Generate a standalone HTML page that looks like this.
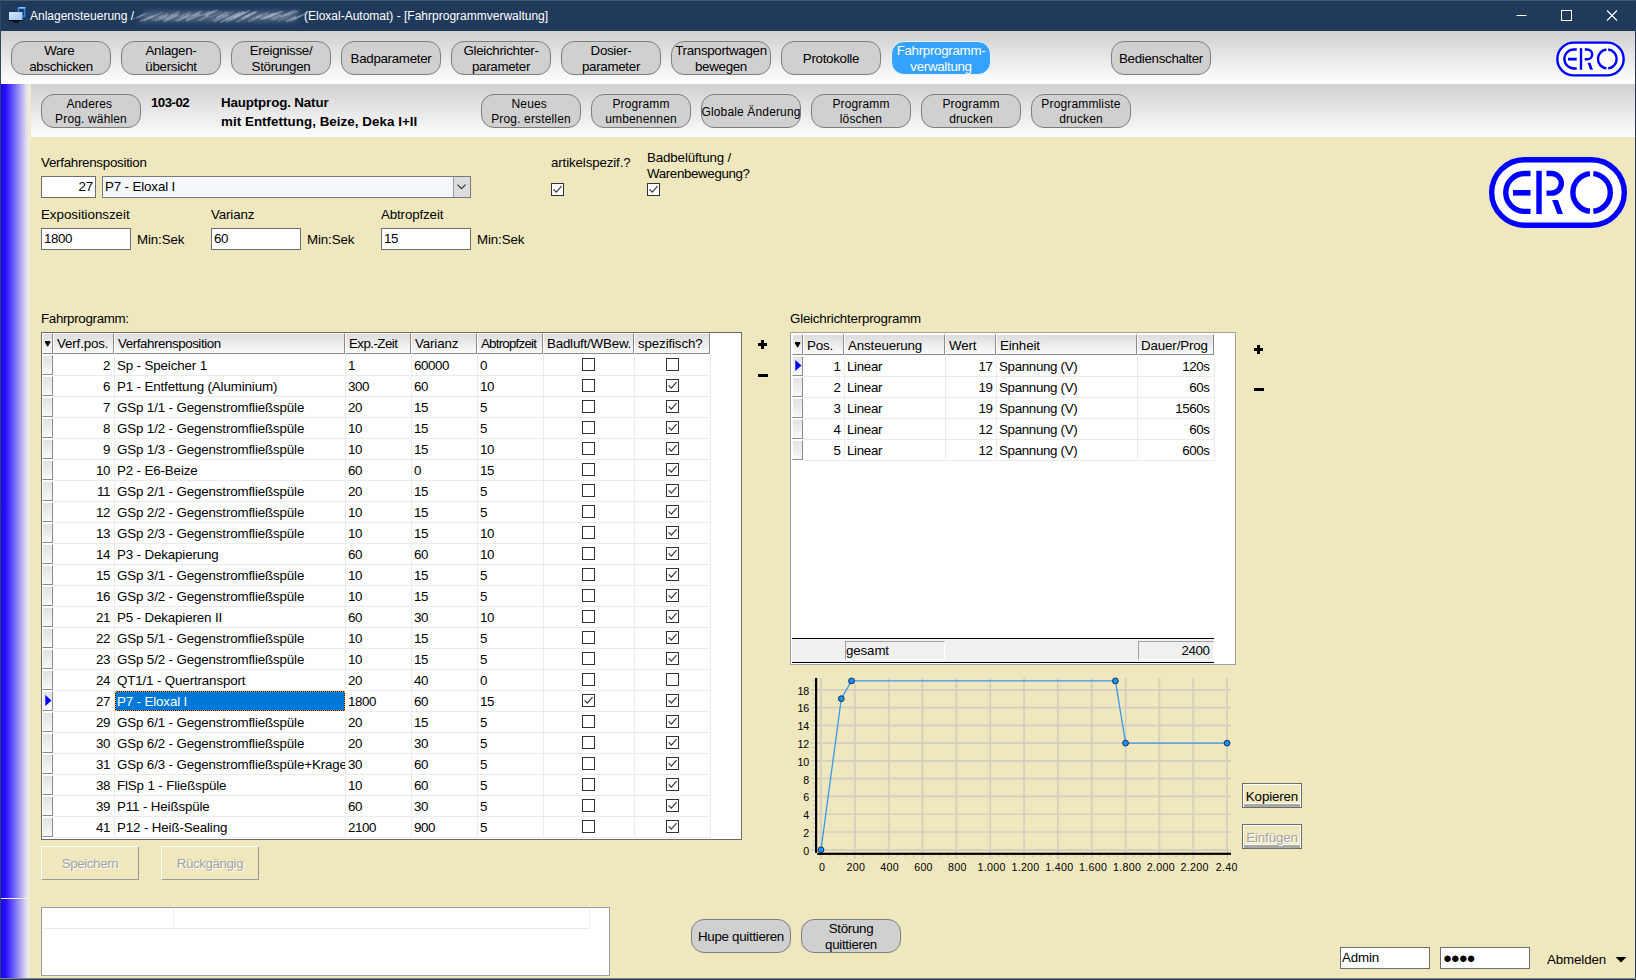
<!DOCTYPE html><html lang="de"><head><meta charset="utf-8"><title>Anlagensteuerung (Eloxal-Automat) - [Fahrprogrammverwaltung]</title><style>
*{box-sizing:border-box;margin:0;padding:0}
html,body{width:1636px;height:980px;overflow:hidden}
body{position:relative;background:#efe8be;font-family:"Liberation Sans",Arial,sans-serif;font-size:13.33px;line-height:15px;color:#000;letter-spacing:-0.13px}
.abs{position:absolute}
#title{left:0;top:0;width:1636px;height:31px;background:#203a5c;color:#fff;font-size:12px;letter-spacing:0}
#title span{position:absolute;top:9px;white-space:nowrap;line-height:15px}
#tb1{left:1px;top:31px;width:1634px;height:53px;background:linear-gradient(#d0d0d0,#fff)}
#tb2{left:31px;top:84px;width:1604px;height:53px;background:linear-gradient(#d0d0d0,#fdfdfd)}
#lbar{left:1px;top:84px;width:29px;height:894px;background:linear-gradient(90deg,#1a00ff 0%,#2a14ff 18%,#8a80f4 55%,#e4dff0 88%,#f4efd8 100%)}
#lsplit{left:1px;top:898px;width:29px;height:1px;background:#f6f0d8}
.frameL{left:0;top:0;width:1px;height:980px;background:#2f4866}
.frameT{left:0;top:0;width:1636px;height:1px;background:#44586f}
.frameR{left:1635px;top:0;width:1px;height:980px;background:#203a5c}
.frameB{left:0;top:978px;width:1636px;height:2px;background:linear-gradient(#7f8a93 0,#7f8a93 50%,#203a5c 50%)}
.rb{position:absolute;width:100px;height:34px;border:1px solid #7d7d7d;border-radius:13px;background:#d0d0d0;display:flex;align-items:center;justify-content:center;text-align:center;font-size:13.33px;line-height:16px;letter-spacing:-0.3px;white-space:nowrap;padding-top:2px}
.rb.s{font-size:12px;line-height:15px;letter-spacing:0.15px}
.rb.act{background:#35a2ff;border-color:#e8f4ff;color:#fff}
.lbl{position:absolute;white-space:nowrap}
.b{font-weight:bold}
.inp{position:absolute;height:22px;border:1px solid #6e6e6e;background:#fff;padding:2px 2px 0 2px;white-space:nowrap;overflow:hidden}
.cb{position:absolute;width:13px;height:13px;border:1px solid #333;background:#fff}
.cb svg{position:absolute;left:0;top:0}
</style></head><body>
<div id="title" class="abs">
<svg class="abs" style="left:0;top:0" width="30" height="31" viewBox="0 0 30 31"><defs><linearGradient id="mg" x1="0" y1="0" x2="1" y2="1"><stop offset="0" stop-color="#d4e6fb"/><stop offset="1" stop-color="#9fc6f3"/></linearGradient></defs><rect x="18.3" y="7.7" width="6.3" height="8.6" fill="none" stroke="#1e8fff" stroke-width="1.5"/><rect x="19" y="7" width="6.3" height="1.6" fill="#7cc0ff"/><rect x="8.6" y="11.6" width="14.2" height="9.6" fill="#203a5c"/><rect x="9" y="12" width="13.4" height="8.1" fill="url(#mg)"/><rect x="9" y="20" width="13.4" height="1.1" fill="#0a0a0a"/><rect x="12.8" y="21.4" width="6.2" height="1.3" rx="0.6" fill="#050505"/></svg>
<span style="left:30px">Anlagensteuerung /</span>
<span style="left:304px">(Eloxal-Automat) - [Fahrprogrammverwaltung]</span>
<svg class="abs" style="left:132px;top:4px" width="176" height="24" viewBox="0 0 176 24"><defs><filter id="bl" x="-5%" y="-30%" width="110%" height="160%"><feGaussianBlur stdDeviation="0.7"/></filter><filter id="bl2" x="-10%" y="-50%" width="120%" height="200%"><feGaussianBlur stdDeviation="2"/></filter></defs><path d="M6 18L13 7H160L168 6L163 18Z" fill="#95a5bc" fill-opacity="0.36" filter="url(#bl2)"/><g filter="url(#bl)">
<line x1="1.6" y1="15.0" x2="10.5" y2="10.8" stroke="#c3cedd" stroke-opacity="0.18" stroke-width="1.6" stroke-linecap="round"/>
<line x1="4.0" y1="14.0" x2="12.4" y2="10.1" stroke="#c3cedd" stroke-opacity="0.17" stroke-width="1.5" stroke-linecap="round"/>
<line x1="5.7" y1="13.6" x2="14.3" y2="9.5" stroke="#c3cedd" stroke-opacity="0.37" stroke-width="1.1" stroke-linecap="round"/>
<line x1="8.4" y1="17.4" x2="19.9" y2="12.0" stroke="#c3cedd" stroke-opacity="0.31" stroke-width="1.5" stroke-linecap="round"/>
<line x1="12.5" y1="16.1" x2="20.9" y2="12.2" stroke="#c3cedd" stroke-opacity="0.24" stroke-width="1.2" stroke-linecap="round"/>
<line x1="12.8" y1="16.2" x2="22.6" y2="11.6" stroke="#c3cedd" stroke-opacity="0.21" stroke-width="1.7" stroke-linecap="round"/>
<line x1="16.4" y1="14.6" x2="26.5" y2="9.9" stroke="#c3cedd" stroke-opacity="0.18" stroke-width="1.1" stroke-linecap="round"/>
<line x1="17.7" y1="14.3" x2="29.5" y2="8.8" stroke="#c3cedd" stroke-opacity="0.24" stroke-width="1.7" stroke-linecap="round"/>
<line x1="20.7" y1="16.0" x2="30.4" y2="11.5" stroke="#c3cedd" stroke-opacity="0.34" stroke-width="1.3" stroke-linecap="round"/>
<line x1="23.3" y1="16.8" x2="34.3" y2="11.7" stroke="#c3cedd" stroke-opacity="0.35" stroke-width="1.3" stroke-linecap="round"/>
<line x1="26.7" y1="13.5" x2="35.4" y2="9.5" stroke="#c3cedd" stroke-opacity="0.36" stroke-width="1.2" stroke-linecap="round"/>
<line x1="27.8" y1="14.9" x2="36.1" y2="11.1" stroke="#c3cedd" stroke-opacity="0.36" stroke-width="1.7" stroke-linecap="round"/>
<line x1="31.1" y1="15.5" x2="40.9" y2="10.9" stroke="#c3cedd" stroke-opacity="0.31" stroke-width="1.7" stroke-linecap="round"/>
<line x1="32.4" y1="17.6" x2="45.1" y2="11.7" stroke="#c3cedd" stroke-opacity="0.28" stroke-width="1.8" stroke-linecap="round"/>
<line x1="33.8" y1="15.7" x2="45.7" y2="10.1" stroke="#c3cedd" stroke-opacity="0.42" stroke-width="2.0" stroke-linecap="round"/>
<line x1="36.7" y1="15.4" x2="46.9" y2="10.6" stroke="#c3cedd" stroke-opacity="0.17" stroke-width="1.6" stroke-linecap="round"/>
<line x1="38.8" y1="11.4" x2="47.5" y2="7.3" stroke="#c3cedd" stroke-opacity="0.36" stroke-width="1.2" stroke-linecap="round"/>
<line x1="41.3" y1="16.6" x2="51.6" y2="11.8" stroke="#c3cedd" stroke-opacity="0.18" stroke-width="1.5" stroke-linecap="round"/>
<line x1="44.4" y1="16.9" x2="57.3" y2="10.9" stroke="#c3cedd" stroke-opacity="0.38" stroke-width="1.3" stroke-linecap="round"/>
<line x1="46.4" y1="16.6" x2="56.5" y2="12.0" stroke="#c3cedd" stroke-opacity="0.41" stroke-width="1.2" stroke-linecap="round"/>
<line x1="48.2" y1="12.6" x2="57.6" y2="8.2" stroke="#c3cedd" stroke-opacity="0.29" stroke-width="1.7" stroke-linecap="round"/>
<line x1="50.8" y1="13.4" x2="58.9" y2="9.6" stroke="#c3cedd" stroke-opacity="0.26" stroke-width="1.7" stroke-linecap="round"/>
<line x1="54.8" y1="14.9" x2="66.6" y2="9.3" stroke="#c3cedd" stroke-opacity="0.32" stroke-width="1.8" stroke-linecap="round"/>
<line x1="55.0" y1="16.7" x2="67.9" y2="10.7" stroke="#c3cedd" stroke-opacity="0.39" stroke-width="2.0" stroke-linecap="round"/>
<line x1="58.1" y1="12.0" x2="68.4" y2="7.2" stroke="#c3cedd" stroke-opacity="0.32" stroke-width="1.1" stroke-linecap="round"/>
<line x1="59.7" y1="12.1" x2="68.9" y2="7.8" stroke="#c3cedd" stroke-opacity="0.25" stroke-width="1.1" stroke-linecap="round"/>
<line x1="61.9" y1="11.7" x2="70.8" y2="7.5" stroke="#c3cedd" stroke-opacity="0.25" stroke-width="1.0" stroke-linecap="round"/>
<line x1="66.3" y1="12.6" x2="77.8" y2="7.2" stroke="#c3cedd" stroke-opacity="0.23" stroke-width="1.4" stroke-linecap="round"/>
<line x1="67.5" y1="16.1" x2="76.2" y2="12.0" stroke="#c3cedd" stroke-opacity="0.42" stroke-width="1.6" stroke-linecap="round"/>
<line x1="70.1" y1="11.6" x2="78.7" y2="7.6" stroke="#c3cedd" stroke-opacity="0.25" stroke-width="1.3" stroke-linecap="round"/>
<line x1="73.3" y1="11.2" x2="82.3" y2="7.0" stroke="#c3cedd" stroke-opacity="0.41" stroke-width="1.6" stroke-linecap="round"/>
<line x1="74.0" y1="11.7" x2="85.0" y2="6.6" stroke="#c3cedd" stroke-opacity="0.30" stroke-width="2.2" stroke-linecap="round"/>
<line x1="78.1" y1="13.3" x2="89.9" y2="7.8" stroke="#c3cedd" stroke-opacity="0.26" stroke-width="1.2" stroke-linecap="round"/>
<line x1="80.2" y1="16.2" x2="91.2" y2="11.1" stroke="#c3cedd" stroke-opacity="0.25" stroke-width="1.3" stroke-linecap="round"/>
<line x1="82.6" y1="17.2" x2="96.1" y2="11.0" stroke="#c3cedd" stroke-opacity="0.37" stroke-width="2.0" stroke-linecap="round"/>
<line x1="84.8" y1="14.3" x2="94.2" y2="9.9" stroke="#c3cedd" stroke-opacity="0.25" stroke-width="1.0" stroke-linecap="round"/>
<line x1="85.5" y1="12.8" x2="95.1" y2="8.3" stroke="#c3cedd" stroke-opacity="0.34" stroke-width="2.1" stroke-linecap="round"/>
<line x1="88.8" y1="18.0" x2="102.0" y2="11.9" stroke="#c3cedd" stroke-opacity="0.41" stroke-width="1.4" stroke-linecap="round"/>
<line x1="90.6" y1="12.4" x2="100.0" y2="8.0" stroke="#c3cedd" stroke-opacity="0.21" stroke-width="1.7" stroke-linecap="round"/>
<line x1="94.6" y1="14.8" x2="107.2" y2="8.9" stroke="#c3cedd" stroke-opacity="0.33" stroke-width="2.0" stroke-linecap="round"/>
<line x1="95.0" y1="17.2" x2="106.7" y2="11.7" stroke="#c3cedd" stroke-opacity="0.36" stroke-width="1.9" stroke-linecap="round"/>
<line x1="98.3" y1="15.8" x2="107.4" y2="11.6" stroke="#c3cedd" stroke-opacity="0.25" stroke-width="2.0" stroke-linecap="round"/>
<line x1="101.8" y1="13.8" x2="112.1" y2="9.0" stroke="#c3cedd" stroke-opacity="0.41" stroke-width="1.9" stroke-linecap="round"/>
<line x1="102.3" y1="12.0" x2="111.0" y2="7.9" stroke="#c3cedd" stroke-opacity="0.40" stroke-width="2.0" stroke-linecap="round"/>
<line x1="104.6" y1="17.8" x2="117.1" y2="12.0" stroke="#c3cedd" stroke-opacity="0.33" stroke-width="1.4" stroke-linecap="round"/>
<line x1="107.9" y1="11.1" x2="116.7" y2="7.0" stroke="#c3cedd" stroke-opacity="0.41" stroke-width="1.8" stroke-linecap="round"/>
<line x1="110.2" y1="14.7" x2="123.3" y2="8.5" stroke="#c3cedd" stroke-opacity="0.39" stroke-width="2.0" stroke-linecap="round"/>
<line x1="111.8" y1="13.0" x2="121.2" y2="8.6" stroke="#c3cedd" stroke-opacity="0.22" stroke-width="1.7" stroke-linecap="round"/>
<line x1="114.2" y1="12.2" x2="124.6" y2="7.4" stroke="#c3cedd" stroke-opacity="0.40" stroke-width="1.4" stroke-linecap="round"/>
<line x1="117.0" y1="17.1" x2="128.3" y2="11.8" stroke="#c3cedd" stroke-opacity="0.27" stroke-width="2.1" stroke-linecap="round"/>
<line x1="119.5" y1="14.7" x2="130.5" y2="9.6" stroke="#c3cedd" stroke-opacity="0.16" stroke-width="1.5" stroke-linecap="round"/>
<line x1="121.1" y1="15.7" x2="129.2" y2="11.9" stroke="#c3cedd" stroke-opacity="0.20" stroke-width="1.6" stroke-linecap="round"/>
<line x1="124.7" y1="13.5" x2="135.8" y2="8.4" stroke="#c3cedd" stroke-opacity="0.29" stroke-width="1.7" stroke-linecap="round"/>
<line x1="127.2" y1="14.4" x2="135.9" y2="10.3" stroke="#c3cedd" stroke-opacity="0.22" stroke-width="1.3" stroke-linecap="round"/>
<line x1="129.6" y1="14.9" x2="140.4" y2="9.8" stroke="#c3cedd" stroke-opacity="0.36" stroke-width="2.1" stroke-linecap="round"/>
<line x1="131.1" y1="14.7" x2="142.5" y2="9.4" stroke="#c3cedd" stroke-opacity="0.29" stroke-width="1.8" stroke-linecap="round"/>
<line x1="133.5" y1="14.4" x2="144.5" y2="9.3" stroke="#c3cedd" stroke-opacity="0.40" stroke-width="1.8" stroke-linecap="round"/>
<line x1="136.9" y1="13.6" x2="150.0" y2="7.5" stroke="#c3cedd" stroke-opacity="0.31" stroke-width="2.1" stroke-linecap="round"/>
<line x1="139.1" y1="11.8" x2="148.0" y2="7.7" stroke="#c3cedd" stroke-opacity="0.27" stroke-width="1.1" stroke-linecap="round"/>
<line x1="140.0" y1="15.0" x2="148.5" y2="11.0" stroke="#c3cedd" stroke-opacity="0.36" stroke-width="2.1" stroke-linecap="round"/>
<line x1="142.2" y1="15.8" x2="154.1" y2="10.2" stroke="#c3cedd" stroke-opacity="0.20" stroke-width="2.1" stroke-linecap="round"/>
<line x1="146.5" y1="16.9" x2="155.8" y2="12.5" stroke="#c3cedd" stroke-opacity="0.26" stroke-width="1.6" stroke-linecap="round"/>
<line x1="148.9" y1="12.9" x2="161.5" y2="7.0" stroke="#c3cedd" stroke-opacity="0.27" stroke-width="1.6" stroke-linecap="round"/>
<line x1="149.7" y1="13.0" x2="158.8" y2="8.8" stroke="#c3cedd" stroke-opacity="0.35" stroke-width="1.0" stroke-linecap="round"/>
<line x1="152.5" y1="11.6" x2="163.0" y2="6.7" stroke="#c3cedd" stroke-opacity="0.25" stroke-width="1.7" stroke-linecap="round"/>
<line x1="154.8" y1="16.9" x2="163.2" y2="12.9" stroke="#c3cedd" stroke-opacity="0.36" stroke-width="2.2" stroke-linecap="round"/>
<line x1="156.2" y1="11.5" x2="165.7" y2="7.0" stroke="#c3cedd" stroke-opacity="0.36" stroke-width="1.3" stroke-linecap="round"/>
<line x1="158.6" y1="16.9" x2="168.9" y2="12.0" stroke="#c3cedd" stroke-opacity="0.37" stroke-width="1.3" stroke-linecap="round"/>
<line x1="161.0" y1="15.5" x2="174.0" y2="9.4" stroke="#c3cedd" stroke-opacity="0.34" stroke-width="1.1" stroke-linecap="round"/>
<line x1="163.1" y1="14.3" x2="174.9" y2="8.8" stroke="#c3cedd" stroke-opacity="0.18" stroke-width="2.1" stroke-linecap="round"/>
</g></svg>
<svg class="abs" style="left:1498px;top:0" width="138" height="31" viewBox="0 0 138 31" fill="none" stroke="#fff" stroke-width="1"><path d="M18.5 15.5h10"/><rect x="63.5" y="10.5" width="10" height="10"/><path d="M109 10.5l10 10M119 10.5l-10 10" stroke-width="1.1"/></svg>
</div>
<div id="tb1" class="abs"></div><div id="tb2" class="abs"></div>
<div id="lbar" class="abs"></div><div id="lsplit" class="abs"></div>
<div class="rb " style="left:11px;top:41px">Ware&nbsp;<br>abschicken</div>
<div class="rb " style="left:121px;top:41px">Anlagen-<br>übersicht</div>
<div class="rb " style="left:231px;top:41px">Ereignisse/<br>Störungen</div>
<div class="rb " style="left:341px;top:41px">Badparameter</div>
<div class="rb " style="left:451px;top:41px">Gleichrichter-<br>parameter</div>
<div class="rb " style="left:561px;top:41px">Dosier-<br>parameter</div>
<div class="rb " style="left:671px;top:41px">Transportwagen<br>bewegen</div>
<div class="rb " style="left:781px;top:41px">Protokolle</div>
<div class="rb act" style="left:891px;top:41px">Fahrprogramm-<br>verwaltung</div>
<div class="rb " style="left:1111px;top:41px">Bedienschalter</div>
<div class="rb s" style="left:41px;top:94px">Anderes&nbsp;<br>Prog. wählen</div>
<div class="rb s" style="left:481px;top:94px">Neues&nbsp;<br>Prog. erstellen</div>
<div class="rb s" style="left:591px;top:94px">Programm<br>umbenennen</div>
<div class="rb s" style="left:701px;top:94px">Globale Änderung</div>
<div class="rb s" style="left:811px;top:94px">Programm<br>löschen</div>
<div class="rb s" style="left:921px;top:94px">Programm<br>drucken</div>
<div class="rb s" style="left:1031px;top:94px">Programmliste<br>drucken</div>
<div class="lbl b" style="left:151px;top:95px;letter-spacing:-0.55px">103-02</div>
<div class="lbl b" style="left:221px;top:95px">Hauptprog. Natur</div>
<div class="lbl b" style="left:221px;top:114px;letter-spacing:0.06px">mit Entfettung, Beize, Deka I+II</div>
<svg class="abs" style="left:1489px;top:157px" width="138" height="71" viewBox="0 0 138 71" fill="none" stroke="#0000ff" stroke-width="5.4" role="img" aria-label="ERO"><title>ERO</title><rect x="2.7" y="2.7" width="132.6" height="65.6" rx="32.8" fill="#fff"/><path d="M41.5 16.5H35.7A18.95 18.95 0 0 0 35.7 54.4H41.5"/><path d="M24 35.8H41.5" stroke-width="5.6"/><path d="M50 13.8V57.1"/><path d="M57.5 16.5H62.5A9.8 9.8 0 0 1 62.5 36.1H57.5"/><path d="M63.1 43.1H68.9L73.9 57.1H68.4Z" fill="#0000ff" stroke="none"/><path d="M100.9 16.6A18.95 18.95 0 0 0 100.9 54.3"/><path d="M104.3 16.6A18.95 18.95 0 0 1 104.3 54.3"/></svg>
<svg class="abs" style="left:1556px;top:41px" width="69" height="36" viewBox="0 0 138 71" fill="none" stroke="#0000ff" stroke-width="4.8" role="img" aria-label="ERO"><title>ERO</title><rect x="2.7" y="2.7" width="132.6" height="65.6" rx="32.8" fill="#fff"/><path d="M41.5 16.5H35.7A18.95 18.95 0 0 0 35.7 54.4H41.5"/><path d="M24 35.8H41.5" stroke-width="5.6"/><path d="M50 13.8V57.1"/><path d="M57.5 16.5H62.5A9.8 9.8 0 0 1 62.5 36.1H57.5"/><path d="M63.1 43.1H68.9L73.9 57.1H68.4Z" fill="#0000ff" stroke="none"/><path d="M100.9 16.6A18.95 18.95 0 0 0 100.9 54.3"/><path d="M104.3 16.6A18.95 18.95 0 0 1 104.3 54.3"/></svg>
<div class="lbl" style="left:41px;top:155px;letter-spacing:-0.27px">Verfahrensposition</div>
<div class="inp" style="left:41px;top:176px;width:55px;text-align:right">27</div>
<div class="inp" style="left:102px;top:176px;width:369px;background:#f4f7fc;border-color:#7a7a7a">P7 - Eloxal I<div class="abs" style="right:0;top:0;width:17px;height:20px;background:#dcdcdc;border-left:1px solid #a0a0a0"></div><svg class="abs" style="right:4px;top:7px" width="9" height="6" viewBox="0 0 9 6"><path d="M0.5 0.6L4.5 4.6L8.5 0.6" fill="none" stroke="#333" stroke-width="1.25"/></svg></div>
<div class="lbl" style="left:551px;top:155px;">artikelspezif.?</div>
<div class="lbl" style="left:647px;top:150px;">Badbelüftung /</div>
<div class="lbl" style="left:647px;top:166px;letter-spacing:-0.36px">Warenbewegung?</div>
<div class="cb" style="left:551px;top:183px"><svg width="11" height="11" viewBox="0 0 11 11"><path d="M1.6 5.4L4.3 8.2L9.6 2.2" fill="none" stroke="#3a3a3a" stroke-width="1.25"/></svg></div>
<div class="cb" style="left:647px;top:183px"><svg width="11" height="11" viewBox="0 0 11 11"><path d="M1.6 5.4L4.3 8.2L9.6 2.2" fill="none" stroke="#3a3a3a" stroke-width="1.25"/></svg></div>
<div class="lbl" style="left:41px;top:207px;letter-spacing:-0.02px">Expositionszeit</div>
<div class="inp" style="left:41px;top:228px;width:90px;letter-spacing:-0.45px">1800</div>
<div class="lbl" style="left:137px;top:232px;">Min:Sek</div>
<div class="lbl" style="left:211px;top:207px;">Varianz</div>
<div class="inp" style="left:211px;top:228px;width:90px;letter-spacing:-0.45px">60</div>
<div class="lbl" style="left:307px;top:232px;">Min:Sek</div>
<div class="lbl" style="left:381px;top:207px;">Abtropfzeit</div>
<div class="inp" style="left:381px;top:228px;width:90px;letter-spacing:-0.45px">15</div>
<div class="lbl" style="left:477px;top:232px;">Min:Sek</div>
<style>
.grid{position:absolute;background:#fff;border:1px solid #6b6b6b;overflow:hidden}
.hc{position:absolute;height:21px;border-top:1px solid #fff;border-left:1px solid #fff;border-right:1px solid #8c8c8c;border-bottom:1px solid #8c8c8c;background:linear-gradient(#dcdcdc,#fbfbfb);padding:2px 0 0 3px;white-space:nowrap;overflow:hidden}
.rh{position:absolute;width:11px;height:20px;border-top:1px solid #fff;border-left:1px solid #fff;border-right:1px solid #8c8c8c;border-bottom:1px solid #8c8c8c;background:linear-gradient(#e2e2e2,#f8f8f8)}
.c{position:absolute;height:21px;border-right:1px solid #ebebeb;border-bottom:1px solid #ebebeb;padding:3px 4px 0 2px;white-space:nowrap;overflow:hidden}
.c.r{text-align:right}
.c.n{letter-spacing:-0.42px}
.c.nl{padding-left:2px}
.c.sel{color:#fff;border:1px dotted #f29a2e;background:linear-gradient(#0078d7,#0078d7) padding-box,#140c00 border-box;width:230px !important;height:20px;padding:2px 0 0 1px}
</style>
<div class="lbl" style="left:41px;top:311px;letter-spacing:-0.32px">Fahrprogramm:</div>
<div class="grid" style="left:41px;top:332px;width:701px;height:508px">
<div class="hc" style="left:0;top:0;width:11px;padding:0"></div><svg class="abs" style="left:2.9px;top:7.8px" width="7" height="7" viewBox="0 0 7 7"><path d="M0 0H5.2V1.3L3.1 5.3H2.1L0 1.3Z" fill="#000"/></svg>
<div class="hc" style="left:11px;top:0;width:61px;">Verf.pos.</div>
<div class="hc" style="left:72px;top:0;width:231px;letter-spacing:-0.43px;">Verfahrensposition</div>
<div class="hc" style="left:303px;top:0;width:66px;letter-spacing:-0.55px;padding-left:3px;">Exp.-Zeit</div>
<div class="hc" style="left:369px;top:0;width:66px;">Varianz</div>
<div class="hc" style="left:435px;top:0;width:66px;letter-spacing:-0.78px;">Abtropfzeit</div>
<div class="hc" style="left:501px;top:0;width:91px;letter-spacing:-0.2px;padding-left:3px;">Badluft/WBew.</div>
<div class="hc" style="left:592px;top:0;width:76px;">spezifisch?</div>
<div class="rh" style="left:0;top:22px"></div>
<div class="c r n" style="left:12px;top:22px;width:61px">2</div>
<div class="c" style="left:73px;top:22px;width:231px">Sp - Speicher 1</div>
<div class="c n nl" style="left:304px;top:22px;width:66px">1</div>
<div class="c n nl" style="left:370px;top:22px;width:66px">60000</div>
<div class="c n nl" style="left:436px;top:22px;width:66px">0</div>
<div class="c" style="left:502px;top:22px;width:91px;padding:0"><div class="cb" style="left:38px;top:3px"></div></div>
<div class="c" style="left:593px;top:22px;width:76px;padding:0"><div class="cb" style="left:31px;top:3px"></div></div>
<div class="rh" style="left:0;top:43px"></div>
<div class="c r n" style="left:12px;top:43px;width:61px">6</div>
<div class="c" style="left:73px;top:43px;width:231px">P1 - Entfettung (Aluminium)</div>
<div class="c n nl" style="left:304px;top:43px;width:66px">300</div>
<div class="c n nl" style="left:370px;top:43px;width:66px">60</div>
<div class="c n nl" style="left:436px;top:43px;width:66px">10</div>
<div class="c" style="left:502px;top:43px;width:91px;padding:0"><div class="cb" style="left:38px;top:3px"></div></div>
<div class="c" style="left:593px;top:43px;width:76px;padding:0"><div class="cb" style="left:31px;top:3px"><svg width="11" height="11" viewBox="0 0 11 11"><path d="M1.6 5.4L4.3 8.2L9.6 2.2" fill="none" stroke="#3a3a3a" stroke-width="1.25"/></svg></div></div>
<div class="rh" style="left:0;top:64px"></div>
<div class="c r n" style="left:12px;top:64px;width:61px">7</div>
<div class="c" style="left:73px;top:64px;width:231px">GSp 1/1 - Gegenstromfließspüle</div>
<div class="c n nl" style="left:304px;top:64px;width:66px">20</div>
<div class="c n nl" style="left:370px;top:64px;width:66px">15</div>
<div class="c n nl" style="left:436px;top:64px;width:66px">5</div>
<div class="c" style="left:502px;top:64px;width:91px;padding:0"><div class="cb" style="left:38px;top:3px"></div></div>
<div class="c" style="left:593px;top:64px;width:76px;padding:0"><div class="cb" style="left:31px;top:3px"><svg width="11" height="11" viewBox="0 0 11 11"><path d="M1.6 5.4L4.3 8.2L9.6 2.2" fill="none" stroke="#3a3a3a" stroke-width="1.25"/></svg></div></div>
<div class="rh" style="left:0;top:85px"></div>
<div class="c r n" style="left:12px;top:85px;width:61px">8</div>
<div class="c" style="left:73px;top:85px;width:231px">GSp 1/2 - Gegenstromfließspüle</div>
<div class="c n nl" style="left:304px;top:85px;width:66px">10</div>
<div class="c n nl" style="left:370px;top:85px;width:66px">15</div>
<div class="c n nl" style="left:436px;top:85px;width:66px">5</div>
<div class="c" style="left:502px;top:85px;width:91px;padding:0"><div class="cb" style="left:38px;top:3px"></div></div>
<div class="c" style="left:593px;top:85px;width:76px;padding:0"><div class="cb" style="left:31px;top:3px"><svg width="11" height="11" viewBox="0 0 11 11"><path d="M1.6 5.4L4.3 8.2L9.6 2.2" fill="none" stroke="#3a3a3a" stroke-width="1.25"/></svg></div></div>
<div class="rh" style="left:0;top:106px"></div>
<div class="c r n" style="left:12px;top:106px;width:61px">9</div>
<div class="c" style="left:73px;top:106px;width:231px">GSp 1/3 - Gegenstromfließspüle</div>
<div class="c n nl" style="left:304px;top:106px;width:66px">10</div>
<div class="c n nl" style="left:370px;top:106px;width:66px">15</div>
<div class="c n nl" style="left:436px;top:106px;width:66px">10</div>
<div class="c" style="left:502px;top:106px;width:91px;padding:0"><div class="cb" style="left:38px;top:3px"></div></div>
<div class="c" style="left:593px;top:106px;width:76px;padding:0"><div class="cb" style="left:31px;top:3px"><svg width="11" height="11" viewBox="0 0 11 11"><path d="M1.6 5.4L4.3 8.2L9.6 2.2" fill="none" stroke="#3a3a3a" stroke-width="1.25"/></svg></div></div>
<div class="rh" style="left:0;top:127px"></div>
<div class="c r n" style="left:12px;top:127px;width:61px">10</div>
<div class="c" style="left:73px;top:127px;width:231px">P2 - E6-Beize</div>
<div class="c n nl" style="left:304px;top:127px;width:66px">60</div>
<div class="c n nl" style="left:370px;top:127px;width:66px">0</div>
<div class="c n nl" style="left:436px;top:127px;width:66px">15</div>
<div class="c" style="left:502px;top:127px;width:91px;padding:0"><div class="cb" style="left:38px;top:3px"></div></div>
<div class="c" style="left:593px;top:127px;width:76px;padding:0"><div class="cb" style="left:31px;top:3px"><svg width="11" height="11" viewBox="0 0 11 11"><path d="M1.6 5.4L4.3 8.2L9.6 2.2" fill="none" stroke="#3a3a3a" stroke-width="1.25"/></svg></div></div>
<div class="rh" style="left:0;top:148px"></div>
<div class="c r n" style="left:12px;top:148px;width:61px">11</div>
<div class="c" style="left:73px;top:148px;width:231px">GSp 2/1 - Gegenstromfließspüle</div>
<div class="c n nl" style="left:304px;top:148px;width:66px">20</div>
<div class="c n nl" style="left:370px;top:148px;width:66px">15</div>
<div class="c n nl" style="left:436px;top:148px;width:66px">5</div>
<div class="c" style="left:502px;top:148px;width:91px;padding:0"><div class="cb" style="left:38px;top:3px"></div></div>
<div class="c" style="left:593px;top:148px;width:76px;padding:0"><div class="cb" style="left:31px;top:3px"><svg width="11" height="11" viewBox="0 0 11 11"><path d="M1.6 5.4L4.3 8.2L9.6 2.2" fill="none" stroke="#3a3a3a" stroke-width="1.25"/></svg></div></div>
<div class="rh" style="left:0;top:169px"></div>
<div class="c r n" style="left:12px;top:169px;width:61px">12</div>
<div class="c" style="left:73px;top:169px;width:231px">GSp 2/2 - Gegenstromfließspüle</div>
<div class="c n nl" style="left:304px;top:169px;width:66px">10</div>
<div class="c n nl" style="left:370px;top:169px;width:66px">15</div>
<div class="c n nl" style="left:436px;top:169px;width:66px">5</div>
<div class="c" style="left:502px;top:169px;width:91px;padding:0"><div class="cb" style="left:38px;top:3px"></div></div>
<div class="c" style="left:593px;top:169px;width:76px;padding:0"><div class="cb" style="left:31px;top:3px"><svg width="11" height="11" viewBox="0 0 11 11"><path d="M1.6 5.4L4.3 8.2L9.6 2.2" fill="none" stroke="#3a3a3a" stroke-width="1.25"/></svg></div></div>
<div class="rh" style="left:0;top:190px"></div>
<div class="c r n" style="left:12px;top:190px;width:61px">13</div>
<div class="c" style="left:73px;top:190px;width:231px">GSp 2/3 - Gegenstromfließspüle</div>
<div class="c n nl" style="left:304px;top:190px;width:66px">10</div>
<div class="c n nl" style="left:370px;top:190px;width:66px">15</div>
<div class="c n nl" style="left:436px;top:190px;width:66px">10</div>
<div class="c" style="left:502px;top:190px;width:91px;padding:0"><div class="cb" style="left:38px;top:3px"></div></div>
<div class="c" style="left:593px;top:190px;width:76px;padding:0"><div class="cb" style="left:31px;top:3px"><svg width="11" height="11" viewBox="0 0 11 11"><path d="M1.6 5.4L4.3 8.2L9.6 2.2" fill="none" stroke="#3a3a3a" stroke-width="1.25"/></svg></div></div>
<div class="rh" style="left:0;top:211px"></div>
<div class="c r n" style="left:12px;top:211px;width:61px">14</div>
<div class="c" style="left:73px;top:211px;width:231px">P3 - Dekapierung</div>
<div class="c n nl" style="left:304px;top:211px;width:66px">60</div>
<div class="c n nl" style="left:370px;top:211px;width:66px">60</div>
<div class="c n nl" style="left:436px;top:211px;width:66px">10</div>
<div class="c" style="left:502px;top:211px;width:91px;padding:0"><div class="cb" style="left:38px;top:3px"></div></div>
<div class="c" style="left:593px;top:211px;width:76px;padding:0"><div class="cb" style="left:31px;top:3px"><svg width="11" height="11" viewBox="0 0 11 11"><path d="M1.6 5.4L4.3 8.2L9.6 2.2" fill="none" stroke="#3a3a3a" stroke-width="1.25"/></svg></div></div>
<div class="rh" style="left:0;top:232px"></div>
<div class="c r n" style="left:12px;top:232px;width:61px">15</div>
<div class="c" style="left:73px;top:232px;width:231px">GSp 3/1 - Gegenstromfließspüle</div>
<div class="c n nl" style="left:304px;top:232px;width:66px">10</div>
<div class="c n nl" style="left:370px;top:232px;width:66px">15</div>
<div class="c n nl" style="left:436px;top:232px;width:66px">5</div>
<div class="c" style="left:502px;top:232px;width:91px;padding:0"><div class="cb" style="left:38px;top:3px"></div></div>
<div class="c" style="left:593px;top:232px;width:76px;padding:0"><div class="cb" style="left:31px;top:3px"><svg width="11" height="11" viewBox="0 0 11 11"><path d="M1.6 5.4L4.3 8.2L9.6 2.2" fill="none" stroke="#3a3a3a" stroke-width="1.25"/></svg></div></div>
<div class="rh" style="left:0;top:253px"></div>
<div class="c r n" style="left:12px;top:253px;width:61px">16</div>
<div class="c" style="left:73px;top:253px;width:231px">GSp 3/2 - Gegenstromfließspüle</div>
<div class="c n nl" style="left:304px;top:253px;width:66px">10</div>
<div class="c n nl" style="left:370px;top:253px;width:66px">15</div>
<div class="c n nl" style="left:436px;top:253px;width:66px">5</div>
<div class="c" style="left:502px;top:253px;width:91px;padding:0"><div class="cb" style="left:38px;top:3px"></div></div>
<div class="c" style="left:593px;top:253px;width:76px;padding:0"><div class="cb" style="left:31px;top:3px"><svg width="11" height="11" viewBox="0 0 11 11"><path d="M1.6 5.4L4.3 8.2L9.6 2.2" fill="none" stroke="#3a3a3a" stroke-width="1.25"/></svg></div></div>
<div class="rh" style="left:0;top:274px"></div>
<div class="c r n" style="left:12px;top:274px;width:61px">21</div>
<div class="c" style="left:73px;top:274px;width:231px">P5 - Dekapieren II</div>
<div class="c n nl" style="left:304px;top:274px;width:66px">60</div>
<div class="c n nl" style="left:370px;top:274px;width:66px">30</div>
<div class="c n nl" style="left:436px;top:274px;width:66px">10</div>
<div class="c" style="left:502px;top:274px;width:91px;padding:0"><div class="cb" style="left:38px;top:3px"></div></div>
<div class="c" style="left:593px;top:274px;width:76px;padding:0"><div class="cb" style="left:31px;top:3px"><svg width="11" height="11" viewBox="0 0 11 11"><path d="M1.6 5.4L4.3 8.2L9.6 2.2" fill="none" stroke="#3a3a3a" stroke-width="1.25"/></svg></div></div>
<div class="rh" style="left:0;top:295px"></div>
<div class="c r n" style="left:12px;top:295px;width:61px">22</div>
<div class="c" style="left:73px;top:295px;width:231px">GSp 5/1 - Gegenstromfließspüle</div>
<div class="c n nl" style="left:304px;top:295px;width:66px">10</div>
<div class="c n nl" style="left:370px;top:295px;width:66px">15</div>
<div class="c n nl" style="left:436px;top:295px;width:66px">5</div>
<div class="c" style="left:502px;top:295px;width:91px;padding:0"><div class="cb" style="left:38px;top:3px"></div></div>
<div class="c" style="left:593px;top:295px;width:76px;padding:0"><div class="cb" style="left:31px;top:3px"><svg width="11" height="11" viewBox="0 0 11 11"><path d="M1.6 5.4L4.3 8.2L9.6 2.2" fill="none" stroke="#3a3a3a" stroke-width="1.25"/></svg></div></div>
<div class="rh" style="left:0;top:316px"></div>
<div class="c r n" style="left:12px;top:316px;width:61px">23</div>
<div class="c" style="left:73px;top:316px;width:231px">GSp 5/2 - Gegenstromfließspüle</div>
<div class="c n nl" style="left:304px;top:316px;width:66px">10</div>
<div class="c n nl" style="left:370px;top:316px;width:66px">15</div>
<div class="c n nl" style="left:436px;top:316px;width:66px">5</div>
<div class="c" style="left:502px;top:316px;width:91px;padding:0"><div class="cb" style="left:38px;top:3px"></div></div>
<div class="c" style="left:593px;top:316px;width:76px;padding:0"><div class="cb" style="left:31px;top:3px"><svg width="11" height="11" viewBox="0 0 11 11"><path d="M1.6 5.4L4.3 8.2L9.6 2.2" fill="none" stroke="#3a3a3a" stroke-width="1.25"/></svg></div></div>
<div class="rh" style="left:0;top:337px"></div>
<div class="c r n" style="left:12px;top:337px;width:61px">24</div>
<div class="c" style="left:73px;top:337px;width:231px">QT1/1 - Quertransport</div>
<div class="c n nl" style="left:304px;top:337px;width:66px">20</div>
<div class="c n nl" style="left:370px;top:337px;width:66px">40</div>
<div class="c n nl" style="left:436px;top:337px;width:66px">0</div>
<div class="c" style="left:502px;top:337px;width:91px;padding:0"><div class="cb" style="left:38px;top:3px"></div></div>
<div class="c" style="left:593px;top:337px;width:76px;padding:0"><div class="cb" style="left:31px;top:3px"></div></div>
<div class="rh" style="left:0;top:358px"></div>
<svg class="abs" style="left:3px;top:362px" width="7" height="11" viewBox="0 0 7 11"><path d="M0.3 0L6.5 5.5L0.3 11Z" fill="#0000ee"/></svg>
<div class="c r n" style="left:12px;top:358px;width:61px">27</div>
<div class="c sel" style="left:73px;top:358px;width:231px">P7 - Eloxal I</div>
<div class="c n nl" style="left:304px;top:358px;width:66px">1800</div>
<div class="c n nl" style="left:370px;top:358px;width:66px">60</div>
<div class="c n nl" style="left:436px;top:358px;width:66px">15</div>
<div class="c" style="left:502px;top:358px;width:91px;padding:0"><div class="cb" style="left:38px;top:3px"><svg width="11" height="11" viewBox="0 0 11 11"><path d="M1.6 5.4L4.3 8.2L9.6 2.2" fill="none" stroke="#3a3a3a" stroke-width="1.25"/></svg></div></div>
<div class="c" style="left:593px;top:358px;width:76px;padding:0"><div class="cb" style="left:31px;top:3px"><svg width="11" height="11" viewBox="0 0 11 11"><path d="M1.6 5.4L4.3 8.2L9.6 2.2" fill="none" stroke="#3a3a3a" stroke-width="1.25"/></svg></div></div>
<div class="rh" style="left:0;top:379px"></div>
<div class="c r n" style="left:12px;top:379px;width:61px">29</div>
<div class="c" style="left:73px;top:379px;width:231px">GSp 6/1 - Gegenstromfließspüle</div>
<div class="c n nl" style="left:304px;top:379px;width:66px">20</div>
<div class="c n nl" style="left:370px;top:379px;width:66px">15</div>
<div class="c n nl" style="left:436px;top:379px;width:66px">5</div>
<div class="c" style="left:502px;top:379px;width:91px;padding:0"><div class="cb" style="left:38px;top:3px"></div></div>
<div class="c" style="left:593px;top:379px;width:76px;padding:0"><div class="cb" style="left:31px;top:3px"><svg width="11" height="11" viewBox="0 0 11 11"><path d="M1.6 5.4L4.3 8.2L9.6 2.2" fill="none" stroke="#3a3a3a" stroke-width="1.25"/></svg></div></div>
<div class="rh" style="left:0;top:400px"></div>
<div class="c r n" style="left:12px;top:400px;width:61px">30</div>
<div class="c" style="left:73px;top:400px;width:231px">GSp 6/2 - Gegenstromfließspüle</div>
<div class="c n nl" style="left:304px;top:400px;width:66px">20</div>
<div class="c n nl" style="left:370px;top:400px;width:66px">30</div>
<div class="c n nl" style="left:436px;top:400px;width:66px">5</div>
<div class="c" style="left:502px;top:400px;width:91px;padding:0"><div class="cb" style="left:38px;top:3px"></div></div>
<div class="c" style="left:593px;top:400px;width:76px;padding:0"><div class="cb" style="left:31px;top:3px"><svg width="11" height="11" viewBox="0 0 11 11"><path d="M1.6 5.4L4.3 8.2L9.6 2.2" fill="none" stroke="#3a3a3a" stroke-width="1.25"/></svg></div></div>
<div class="rh" style="left:0;top:421px"></div>
<div class="c r n" style="left:12px;top:421px;width:61px">31</div>
<div class="c" style="left:73px;top:421px;width:231px">GSp 6/3 - Gegenstromfließspüle+Kragen</div>
<div class="c n nl" style="left:304px;top:421px;width:66px">30</div>
<div class="c n nl" style="left:370px;top:421px;width:66px">60</div>
<div class="c n nl" style="left:436px;top:421px;width:66px">5</div>
<div class="c" style="left:502px;top:421px;width:91px;padding:0"><div class="cb" style="left:38px;top:3px"></div></div>
<div class="c" style="left:593px;top:421px;width:76px;padding:0"><div class="cb" style="left:31px;top:3px"><svg width="11" height="11" viewBox="0 0 11 11"><path d="M1.6 5.4L4.3 8.2L9.6 2.2" fill="none" stroke="#3a3a3a" stroke-width="1.25"/></svg></div></div>
<div class="rh" style="left:0;top:442px"></div>
<div class="c r n" style="left:12px;top:442px;width:61px">38</div>
<div class="c" style="left:73px;top:442px;width:231px">FlSp 1 - Fließspüle</div>
<div class="c n nl" style="left:304px;top:442px;width:66px">10</div>
<div class="c n nl" style="left:370px;top:442px;width:66px">60</div>
<div class="c n nl" style="left:436px;top:442px;width:66px">5</div>
<div class="c" style="left:502px;top:442px;width:91px;padding:0"><div class="cb" style="left:38px;top:3px"></div></div>
<div class="c" style="left:593px;top:442px;width:76px;padding:0"><div class="cb" style="left:31px;top:3px"><svg width="11" height="11" viewBox="0 0 11 11"><path d="M1.6 5.4L4.3 8.2L9.6 2.2" fill="none" stroke="#3a3a3a" stroke-width="1.25"/></svg></div></div>
<div class="rh" style="left:0;top:463px"></div>
<div class="c r n" style="left:12px;top:463px;width:61px">39</div>
<div class="c" style="left:73px;top:463px;width:231px">P11 - Heißspüle</div>
<div class="c n nl" style="left:304px;top:463px;width:66px">60</div>
<div class="c n nl" style="left:370px;top:463px;width:66px">30</div>
<div class="c n nl" style="left:436px;top:463px;width:66px">5</div>
<div class="c" style="left:502px;top:463px;width:91px;padding:0"><div class="cb" style="left:38px;top:3px"></div></div>
<div class="c" style="left:593px;top:463px;width:76px;padding:0"><div class="cb" style="left:31px;top:3px"><svg width="11" height="11" viewBox="0 0 11 11"><path d="M1.6 5.4L4.3 8.2L9.6 2.2" fill="none" stroke="#3a3a3a" stroke-width="1.25"/></svg></div></div>
<div class="rh" style="left:0;top:484px"></div>
<div class="c r n" style="left:12px;top:484px;width:61px">41</div>
<div class="c" style="left:73px;top:484px;width:231px">P12 - Heiß-Sealing</div>
<div class="c n nl" style="left:304px;top:484px;width:66px">2100</div>
<div class="c n nl" style="left:370px;top:484px;width:66px">900</div>
<div class="c n nl" style="left:436px;top:484px;width:66px">5</div>
<div class="c" style="left:502px;top:484px;width:91px;padding:0"><div class="cb" style="left:38px;top:3px"></div></div>
<div class="c" style="left:593px;top:484px;width:76px;padding:0"><div class="cb" style="left:31px;top:3px"><svg width="11" height="11" viewBox="0 0 11 11"><path d="M1.6 5.4L4.3 8.2L9.6 2.2" fill="none" stroke="#3a3a3a" stroke-width="1.25"/></svg></div></div>
</div>
<svg class="abs" style="left:758px;top:340px" width="9" height="9" viewBox="0 0 9 9"><path d="M0 4.5H9M4.5 0V9" stroke="#000" stroke-width="3"/></svg>
<svg class="abs" style="left:758px;top:374px" width="10" height="3" viewBox="0 0 10 3"><path d="M0 1.5H10" stroke="#000" stroke-width="3"/></svg>
<div class="lbl" style="left:790px;top:311px;letter-spacing:-0.22px">Gleichrichterprogramm</div>
<div class="grid" style="left:790px;top:332px;width:446px;height:333px;border-color:#a0a0a0">
<div class="hc" style="left:1px;top:1px;width:11px;padding:0"></div><svg class="abs" style="left:3.9px;top:8.8px" width="7" height="7" viewBox="0 0 7 7"><path d="M0 0H5.2V1.3L3.1 5.3H2.1L0 1.3Z" fill="#000"/></svg>
<div class="hc" style="left:12px;top:1px;width:41px;padding-top:3px">Pos.</div>
<div class="hc" style="left:53px;top:1px;width:101px;padding-top:3px">Ansteuerung</div>
<div class="hc" style="left:154px;top:1px;width:51px;padding-top:3px">Wert</div>
<div class="hc" style="left:205px;top:1px;width:141px;padding-top:3px">Einheit</div>
<div class="hc" style="left:346px;top:1px;width:77px;padding-top:3px">Dauer/Prog</div>
<div class="rh" style="left:1px;top:23px"></div>
<svg class="abs" style="left:4px;top:27px" width="7" height="11" viewBox="0 0 7 11"><path d="M0.3 0L6.5 5.5L0.3 11Z" fill="#0000ee"/></svg>
<div class="c r n" style="left:13px;top:23px;width:41px;padding-right:3.4px;">1</div>
<div class="c" style="left:54px;top:23px;width:101px;letter-spacing:-0.32px;">Linear</div>
<div class="c r n" style="left:155px;top:23px;width:51px;padding-right:3.4px;">17</div>
<div class="c" style="left:206px;top:23px;width:141px;letter-spacing:-0.32px;">Spannung (V)</div>
<div class="c r n" style="left:347px;top:23px;width:77px;padding-right:4.5px;">120s</div>
<div class="rh" style="left:1px;top:44px"></div>
<div class="c r n" style="left:13px;top:44px;width:41px;padding-right:3.4px;">2</div>
<div class="c" style="left:54px;top:44px;width:101px;letter-spacing:-0.32px;">Linear</div>
<div class="c r n" style="left:155px;top:44px;width:51px;padding-right:3.4px;">19</div>
<div class="c" style="left:206px;top:44px;width:141px;letter-spacing:-0.32px;">Spannung (V)</div>
<div class="c r n" style="left:347px;top:44px;width:77px;padding-right:4.5px;">60s</div>
<div class="rh" style="left:1px;top:65px"></div>
<div class="c r n" style="left:13px;top:65px;width:41px;padding-right:3.4px;">3</div>
<div class="c" style="left:54px;top:65px;width:101px;letter-spacing:-0.32px;">Linear</div>
<div class="c r n" style="left:155px;top:65px;width:51px;padding-right:3.4px;">19</div>
<div class="c" style="left:206px;top:65px;width:141px;letter-spacing:-0.32px;">Spannung (V)</div>
<div class="c r n" style="left:347px;top:65px;width:77px;padding-right:4.5px;">1560s</div>
<div class="rh" style="left:1px;top:86px"></div>
<div class="c r n" style="left:13px;top:86px;width:41px;padding-right:3.4px;">4</div>
<div class="c" style="left:54px;top:86px;width:101px;letter-spacing:-0.32px;">Linear</div>
<div class="c r n" style="left:155px;top:86px;width:51px;padding-right:3.4px;">12</div>
<div class="c" style="left:206px;top:86px;width:141px;letter-spacing:-0.32px;">Spannung (V)</div>
<div class="c r n" style="left:347px;top:86px;width:77px;padding-right:4.5px;">60s</div>
<div class="rh" style="left:1px;top:107px"></div>
<div class="c r n" style="left:13px;top:107px;width:41px;padding-right:3.4px;">5</div>
<div class="c" style="left:54px;top:107px;width:101px;letter-spacing:-0.32px;">Linear</div>
<div class="c r n" style="left:155px;top:107px;width:51px;padding-right:3.4px;">12</div>
<div class="c" style="left:206px;top:107px;width:141px;letter-spacing:-0.32px;">Spannung (V)</div>
<div class="c r n" style="left:347px;top:107px;width:77px;padding-right:4.5px;">600s</div>
<div class="abs" style="left:1px;top:305px;width:422px;height:25px;background:#f0f0f0;border-top:1px solid #000;border-bottom:1px solid #000"></div>
<div class="abs" style="left:54px;top:308px;width:100px;height:19px;border:1px solid;border-color:#a0a0a0 #fff #fff #a0a0a0;padding:1px 0 0 0;">gesamt</div>
<div class="abs" style="left:347px;top:308px;width:76px;height:19px;border:1px solid;border-color:#a0a0a0 #fff #fff #a0a0a0;padding:1px 3.5px 0 0;text-align:right;letter-spacing:-0.42px">2400</div>
</div>
<svg class="abs" style="left:1254px;top:345px" width="9" height="9" viewBox="0 0 9 9"><path d="M0 4.5H9M4.5 0V9" stroke="#000" stroke-width="3"/></svg>
<svg class="abs" style="left:1254px;top:388px" width="10" height="3" viewBox="0 0 10 3"><path d="M0 1.5H10" stroke="#000" stroke-width="3"/></svg>
<svg class="abs" style="left:780px;top:670px;overflow:visible" width="470" height="215" viewBox="780 670 470 215" font-family="Liberation Sans, Arial, sans-serif" font-size="10.67" fill="#000"><line x1="821.00" y1="678" x2="821.00" y2="859" stroke="#d2cfc0" stroke-width="1.7"/><line x1="854.84" y1="678" x2="854.84" y2="859" stroke="#d2cfc0" stroke-width="1.7"/><line x1="888.68" y1="678" x2="888.68" y2="859" stroke="#d2cfc0" stroke-width="1.7"/><line x1="922.52" y1="678" x2="922.52" y2="859" stroke="#d2cfc0" stroke-width="1.7"/><line x1="956.36" y1="678" x2="956.36" y2="859" stroke="#d2cfc0" stroke-width="1.7"/><line x1="990.20" y1="678" x2="990.20" y2="859" stroke="#d2cfc0" stroke-width="1.7"/><line x1="1024.04" y1="678" x2="1024.04" y2="859" stroke="#d2cfc0" stroke-width="1.7"/><line x1="1057.88" y1="678" x2="1057.88" y2="859" stroke="#d2cfc0" stroke-width="1.7"/><line x1="1091.72" y1="678" x2="1091.72" y2="859" stroke="#d2cfc0" stroke-width="1.7"/><line x1="1125.56" y1="678" x2="1125.56" y2="859" stroke="#d2cfc0" stroke-width="1.7"/><line x1="1159.40" y1="678" x2="1159.40" y2="859" stroke="#d2cfc0" stroke-width="1.7"/><line x1="1193.24" y1="678" x2="1193.24" y2="859" stroke="#d2cfc0" stroke-width="1.7"/><line x1="1227.08" y1="678" x2="1227.08" y2="859" stroke="#d2cfc0" stroke-width="1.7"/><line x1="811" y1="849.80" x2="1231" y2="849.80" stroke="#d2cfc0" stroke-width="1.7"/><line x1="811" y1="832.02" x2="1231" y2="832.02" stroke="#d2cfc0" stroke-width="1.7"/><line x1="811" y1="814.24" x2="1231" y2="814.24" stroke="#d2cfc0" stroke-width="1.7"/><line x1="811" y1="796.46" x2="1231" y2="796.46" stroke="#d2cfc0" stroke-width="1.7"/><line x1="811" y1="778.68" x2="1231" y2="778.68" stroke="#d2cfc0" stroke-width="1.7"/><line x1="811" y1="760.90" x2="1231" y2="760.90" stroke="#d2cfc0" stroke-width="1.7"/><line x1="811" y1="743.12" x2="1231" y2="743.12" stroke="#d2cfc0" stroke-width="1.7"/><line x1="811" y1="725.34" x2="1231" y2="725.34" stroke="#d2cfc0" stroke-width="1.7"/><line x1="811" y1="707.56" x2="1231" y2="707.56" stroke="#d2cfc0" stroke-width="1.7"/><line x1="811" y1="689.78" x2="1231" y2="689.78" stroke="#d2cfc0" stroke-width="1.7"/><line x1="829.46" y1="854" x2="829.46" y2="857" stroke="#d2cfc0" stroke-width="1.7"/><line x1="837.92" y1="854" x2="837.92" y2="857" stroke="#d2cfc0" stroke-width="1.7"/><line x1="846.38" y1="854" x2="846.38" y2="857" stroke="#d2cfc0" stroke-width="1.7"/><line x1="863.30" y1="854" x2="863.30" y2="857" stroke="#d2cfc0" stroke-width="1.7"/><line x1="871.76" y1="854" x2="871.76" y2="857" stroke="#d2cfc0" stroke-width="1.7"/><line x1="880.22" y1="854" x2="880.22" y2="857" stroke="#d2cfc0" stroke-width="1.7"/><line x1="897.14" y1="854" x2="897.14" y2="857" stroke="#d2cfc0" stroke-width="1.7"/><line x1="905.60" y1="854" x2="905.60" y2="857" stroke="#d2cfc0" stroke-width="1.7"/><line x1="914.06" y1="854" x2="914.06" y2="857" stroke="#d2cfc0" stroke-width="1.7"/><line x1="930.98" y1="854" x2="930.98" y2="857" stroke="#d2cfc0" stroke-width="1.7"/><line x1="939.44" y1="854" x2="939.44" y2="857" stroke="#d2cfc0" stroke-width="1.7"/><line x1="947.90" y1="854" x2="947.90" y2="857" stroke="#d2cfc0" stroke-width="1.7"/><line x1="964.82" y1="854" x2="964.82" y2="857" stroke="#d2cfc0" stroke-width="1.7"/><line x1="973.28" y1="854" x2="973.28" y2="857" stroke="#d2cfc0" stroke-width="1.7"/><line x1="981.74" y1="854" x2="981.74" y2="857" stroke="#d2cfc0" stroke-width="1.7"/><line x1="998.66" y1="854" x2="998.66" y2="857" stroke="#d2cfc0" stroke-width="1.7"/><line x1="1007.12" y1="854" x2="1007.12" y2="857" stroke="#d2cfc0" stroke-width="1.7"/><line x1="1015.58" y1="854" x2="1015.58" y2="857" stroke="#d2cfc0" stroke-width="1.7"/><line x1="1032.50" y1="854" x2="1032.50" y2="857" stroke="#d2cfc0" stroke-width="1.7"/><line x1="1040.96" y1="854" x2="1040.96" y2="857" stroke="#d2cfc0" stroke-width="1.7"/><line x1="1049.42" y1="854" x2="1049.42" y2="857" stroke="#d2cfc0" stroke-width="1.7"/><line x1="1066.34" y1="854" x2="1066.34" y2="857" stroke="#d2cfc0" stroke-width="1.7"/><line x1="1074.80" y1="854" x2="1074.80" y2="857" stroke="#d2cfc0" stroke-width="1.7"/><line x1="1083.26" y1="854" x2="1083.26" y2="857" stroke="#d2cfc0" stroke-width="1.7"/><line x1="1100.18" y1="854" x2="1100.18" y2="857" stroke="#d2cfc0" stroke-width="1.7"/><line x1="1108.64" y1="854" x2="1108.64" y2="857" stroke="#d2cfc0" stroke-width="1.7"/><line x1="1117.10" y1="854" x2="1117.10" y2="857" stroke="#d2cfc0" stroke-width="1.7"/><line x1="1134.02" y1="854" x2="1134.02" y2="857" stroke="#d2cfc0" stroke-width="1.7"/><line x1="1142.48" y1="854" x2="1142.48" y2="857" stroke="#d2cfc0" stroke-width="1.7"/><line x1="1150.94" y1="854" x2="1150.94" y2="857" stroke="#d2cfc0" stroke-width="1.7"/><line x1="1167.86" y1="854" x2="1167.86" y2="857" stroke="#d2cfc0" stroke-width="1.7"/><line x1="1176.32" y1="854" x2="1176.32" y2="857" stroke="#d2cfc0" stroke-width="1.7"/><line x1="1184.78" y1="854" x2="1184.78" y2="857" stroke="#d2cfc0" stroke-width="1.7"/><line x1="1201.70" y1="854" x2="1201.70" y2="857" stroke="#d2cfc0" stroke-width="1.7"/><line x1="1210.16" y1="854" x2="1210.16" y2="857" stroke="#d2cfc0" stroke-width="1.7"/><line x1="1218.62" y1="854" x2="1218.62" y2="857" stroke="#d2cfc0" stroke-width="1.7"/><line x1="812.5" y1="845.35" x2="815" y2="845.35" stroke="#d2cfc0" stroke-width="1.6"/><line x1="812.5" y1="840.91" x2="815" y2="840.91" stroke="#d2cfc0" stroke-width="1.6"/><line x1="812.5" y1="836.46" x2="815" y2="836.46" stroke="#d2cfc0" stroke-width="1.6"/><line x1="812.5" y1="827.57" x2="815" y2="827.57" stroke="#d2cfc0" stroke-width="1.6"/><line x1="812.5" y1="823.13" x2="815" y2="823.13" stroke="#d2cfc0" stroke-width="1.6"/><line x1="812.5" y1="818.68" x2="815" y2="818.68" stroke="#d2cfc0" stroke-width="1.6"/><line x1="812.5" y1="809.79" x2="815" y2="809.79" stroke="#d2cfc0" stroke-width="1.6"/><line x1="812.5" y1="805.35" x2="815" y2="805.35" stroke="#d2cfc0" stroke-width="1.6"/><line x1="812.5" y1="800.90" x2="815" y2="800.90" stroke="#d2cfc0" stroke-width="1.6"/><line x1="812.5" y1="792.01" x2="815" y2="792.01" stroke="#d2cfc0" stroke-width="1.6"/><line x1="812.5" y1="787.57" x2="815" y2="787.57" stroke="#d2cfc0" stroke-width="1.6"/><line x1="812.5" y1="783.12" x2="815" y2="783.12" stroke="#d2cfc0" stroke-width="1.6"/><line x1="812.5" y1="774.23" x2="815" y2="774.23" stroke="#d2cfc0" stroke-width="1.6"/><line x1="812.5" y1="769.79" x2="815" y2="769.79" stroke="#d2cfc0" stroke-width="1.6"/><line x1="812.5" y1="765.34" x2="815" y2="765.34" stroke="#d2cfc0" stroke-width="1.6"/><line x1="812.5" y1="756.45" x2="815" y2="756.45" stroke="#d2cfc0" stroke-width="1.6"/><line x1="812.5" y1="752.01" x2="815" y2="752.01" stroke="#d2cfc0" stroke-width="1.6"/><line x1="812.5" y1="747.56" x2="815" y2="747.56" stroke="#d2cfc0" stroke-width="1.6"/><line x1="812.5" y1="738.67" x2="815" y2="738.67" stroke="#d2cfc0" stroke-width="1.6"/><line x1="812.5" y1="734.23" x2="815" y2="734.23" stroke="#d2cfc0" stroke-width="1.6"/><line x1="812.5" y1="729.78" x2="815" y2="729.78" stroke="#d2cfc0" stroke-width="1.6"/><line x1="812.5" y1="720.89" x2="815" y2="720.89" stroke="#d2cfc0" stroke-width="1.6"/><line x1="812.5" y1="716.45" x2="815" y2="716.45" stroke="#d2cfc0" stroke-width="1.6"/><line x1="812.5" y1="712.00" x2="815" y2="712.00" stroke="#d2cfc0" stroke-width="1.6"/><line x1="812.5" y1="703.12" x2="815" y2="703.12" stroke="#d2cfc0" stroke-width="1.6"/><line x1="812.5" y1="698.67" x2="815" y2="698.67" stroke="#d2cfc0" stroke-width="1.6"/><line x1="812.5" y1="694.22" x2="815" y2="694.22" stroke="#d2cfc0" stroke-width="1.6"/><line x1="812.5" y1="685.33" x2="815" y2="685.33" stroke="#d2cfc0" stroke-width="1.6"/><line x1="812.5" y1="680.89" x2="815" y2="680.89" stroke="#d2cfc0" stroke-width="1.6"/><rect x="815" y="678" width="2.2" height="174.8" fill="#000"/><rect x="817.2" y="852.7" width="413.8" height="2.2" fill="#000"/><text x="809" y="854.6" text-anchor="end">0</text><text x="809" y="836.8" text-anchor="end">2</text><text x="809" y="819.0" text-anchor="end">4</text><text x="809" y="801.3" text-anchor="end">6</text><text x="809" y="783.5" text-anchor="end">8</text><text x="809" y="765.7" text-anchor="end">10</text><text x="809" y="747.9" text-anchor="end">12</text><text x="809" y="730.1" text-anchor="end">14</text><text x="809" y="712.4" text-anchor="end">16</text><text x="809" y="694.6" text-anchor="end">18</text><text x="822.0" y="871" text-anchor="middle" letter-spacing="0.3">0</text><text x="855.8" y="871" text-anchor="middle" letter-spacing="0.3">200</text><text x="889.7" y="871" text-anchor="middle" letter-spacing="0.3">400</text><text x="923.5" y="871" text-anchor="middle" letter-spacing="0.3">600</text><text x="957.4" y="871" text-anchor="middle" letter-spacing="0.3">800</text><text x="991.7" y="871" text-anchor="middle" letter-spacing="0.3">1.000</text><text x="1025.5" y="871" text-anchor="middle" letter-spacing="0.3">1.200</text><text x="1059.4" y="871" text-anchor="middle" letter-spacing="0.3">1.400</text><text x="1093.2" y="871" text-anchor="middle" letter-spacing="0.3">1.600</text><text x="1127.1" y="871" text-anchor="middle" letter-spacing="0.3">1.800</text><text x="1160.9" y="871" text-anchor="middle" letter-spacing="0.3">2.000</text><text x="1194.7" y="871" text-anchor="middle" letter-spacing="0.3">2.200</text><text x="1215.7" y="871" text-anchor="start" letter-spacing="0.3">2.40</text><polyline fill="none" stroke="#3a98ea" stroke-width="1.3" points="821.00,849.80 841.30,698.67 851.46,680.89 1115.41,680.89 1125.56,743.12 1227.08,743.12"/><circle cx="821.00" cy="849.80" r="2.9" fill="#1e8fff" stroke="#0a2540" stroke-width="0.9"/><circle cx="841.30" cy="698.67" r="2.9" fill="#1e8fff" stroke="#0a2540" stroke-width="0.9"/><circle cx="851.46" cy="680.89" r="2.9" fill="#1e8fff" stroke="#0a2540" stroke-width="0.9"/><circle cx="1115.41" cy="680.89" r="2.9" fill="#1e8fff" stroke="#0a2540" stroke-width="0.9"/><circle cx="1125.56" cy="743.12" r="2.9" fill="#1e8fff" stroke="#0a2540" stroke-width="0.9"/><circle cx="1227.08" cy="743.12" r="2.9" fill="#1e8fff" stroke="#0a2540" stroke-width="0.9"/></svg>
<style>.wb{position:absolute;width:60px;height:25px;border:1px solid #6e6e6e;background:#efe8be;box-shadow:inset 1px 1px 0 #fff,inset -1px 0 0 #fff,inset 0 -3px 0 #a8a8a4,inset 0 -4px 0 #fff;text-align:center;padding-top:5px;white-space:nowrap}.dis{color:#a3a3a3;text-shadow:1px 1px 0 #fff}</style>
<div class="wb" style="left:1242px;top:783px">Kopieren</div>
<div class="wb dis" style="left:1242px;top:824px">Einfügen</div>
<style>.fb{position:absolute;width:98px;height:34px;border:1px solid;border-color:#fff #9c9c9c #9c9c9c #fff;background:#efe8be;text-align:center;padding-top:9px;white-space:nowrap;letter-spacing:-0.4px}</style>
<div class="fb dis" style="left:41px;top:846px">Speichern</div>
<div class="fb dis" style="left:161px;top:846px">Rückgängig</div>
<div class="abs" style="left:41px;top:907px;width:569px;height:69px;background:#fff;border:1px solid #9c9cac"><div class="abs" style="left:1px;top:1px;width:131px;height:20px;border-right:1px solid #ececec;border-bottom:1px solid #ececec"></div><div class="abs" style="left:132px;top:1px;width:416px;height:20px;border-right:1px solid #ececec;border-bottom:1px solid #ececec"></div></div>
<div class="rb" style="left:691px;top:919px">Hupe quittieren</div>
<div class="rb" style="left:801px;top:919px">Störung<br>quittieren</div>
<div class="inp" style="left:1340px;top:947px;width:90px;padding-left:1px">Admin</div>
<div class="inp" style="left:1440px;top:947px;width:90px;font-size:15px;letter-spacing:-1.2px;padding-top:2px">●●●●</div>
<div class="lbl" style="left:1547px;top:952px;">Abmelden</div>
<svg class="abs" style="left:1615px;top:957px" width="12" height="6" viewBox="0 0 12 6"><path d="M0.5 0H11.5L6 5.6Z" fill="#000"/></svg>
<div class="abs frameT"></div><div class="abs frameL"></div><div class="abs frameR"></div><div class="abs frameB"></div>
</body></html>
